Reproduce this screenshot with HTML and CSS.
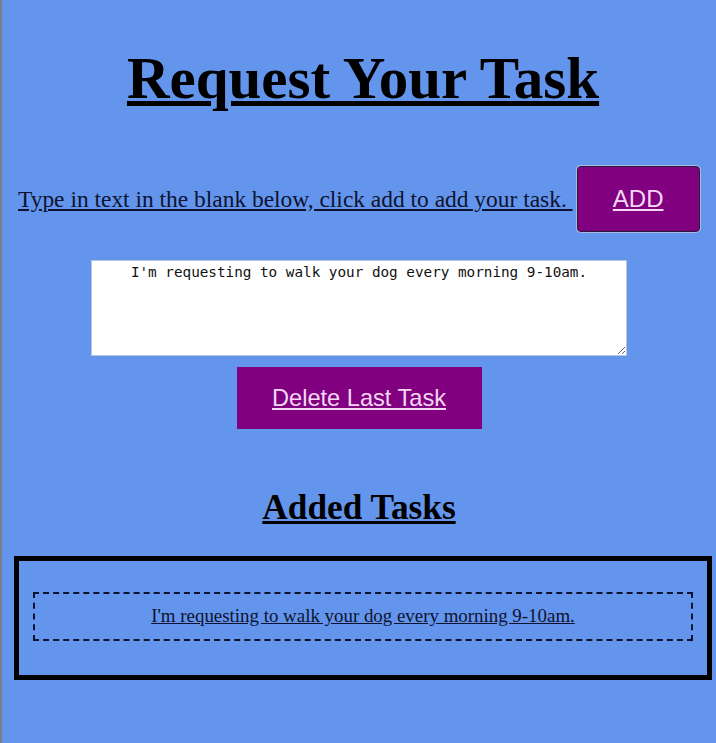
FILE: index.html
```html
<!DOCTYPE html>
<html>
<head>
<meta charset="utf-8">
<link rel="stylesheet" href="styles.css">
</head>
<body>
<div class="page">
  <h1 class="title">Request Your Task</h1>
  <div class="add-row">
    <span class="instructions">Type in text in the blank below, click add to add your task. </span>
    <button class="btn btn-add">ADD</button>
  </div>
  <div class="input-wrap">
    <textarea class="task-input">I'm requesting to walk your dog every morning 9-10am.</textarea>
  </div>
  <div class="delete-wrap">
    <button class="btn btn-delete">Delete Last Task</button>
  </div>
  <h2 class="subtitle">Added Tasks</h2>
  <div class="task-list">
    <div class="task-item">I'm requesting to walk your dog every morning 9-10am.</div>
  </div>
</div>
</body>
</html>
```
FILE: styles.css
```css
html, body {
  margin: 0;
  padding: 0;
  height: 100%;
}
body {
  background: #6495ed;
  font-family: "Liberation Serif", "Times New Roman", serif;
  color: #0d1330;
}
.page {
  min-height: 100%;
  box-sizing: border-box;
  border-left: 2px solid #7a7f8a;
  padding: 0 4px 0 12px;
}
.title {
  margin: 0;
  padding-top: 43px;
  text-align: center;
  font-size: 59px;
  font-weight: bold;
  text-decoration: underline;
  line-height: 70px;
  color: #000;
}
.add-row {
  display: flex;
  align-items: center;
  margin-top: 53px;
  padding-left: 4px;
}
.instructions {
  font-size: 23.45px;
  text-decoration: underline;
  white-space: pre;
}
.btn {
  background: #800080;
  color: #f4d8f4;
  font-family: "Liberation Sans", Arial, sans-serif;
  text-decoration: underline;
  cursor: pointer;
}
.btn-add {
  width: 123px;
  height: 66px;
  font-size: 24px;
  border: 1px solid #2a1a40;
  border-radius: 4px;
  margin-left: 4px;
  box-shadow: 0 0 0 1px #a8b8e0;
  flex-shrink: 0;
}
.input-wrap {
  display: flex;
  justify-content: center;
  margin-top: 28px;
  padding-right: 8px;
}
.task-input {
  width: 536px;
  height: 96px;
  box-sizing: border-box;
  font-family: "DejaVu Sans Mono", "Liberation Mono", monospace;
  font-size: 14.3px;
  text-align: center;
  border: 1px solid #b8c4dc;
  padding: 3px 4px;
  color: #111;
  resize: vertical;
}
.delete-wrap {
  display: flex;
  justify-content: center;
  margin-top: 11px;
  padding-right: 8px;
}
.btn-delete {
  width: 245px;
  height: 62px;
  font-size: 23.6px;
  border: none;
}
.subtitle {
  margin: 57px 0 0;
  text-align: center;
  font-size: 35.3px;
  line-height: 44px;
  font-weight: bold;
  text-decoration: underline;
  color: #000;
  padding-right: 8px;
}
.task-list {
  margin-top: 26px;
  border: 5px solid #000;
  padding: 31px 14px 34px 14px;
  width: 698px;
  box-sizing: border-box;
}
.task-item {
  border: 2px dashed #0d1330;
  padding: 11px 0 12px;
  text-align: center;
  font-size: 18.9px;
  text-decoration: underline;
}
```
